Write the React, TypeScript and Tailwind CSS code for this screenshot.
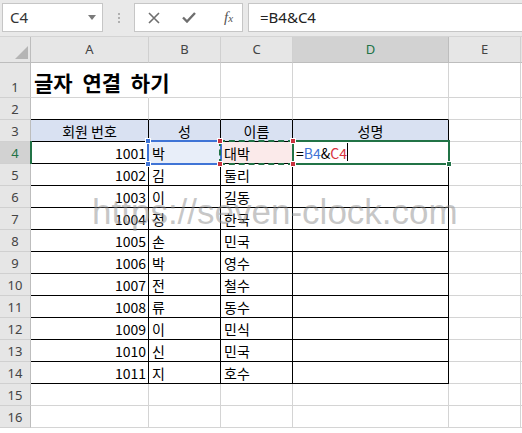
import React from 'react'

const COLS = ['A', 'B', 'C', 'D', 'E']

const DATA: Record<number, [string, string, string]> = {
  4: ['1001', '박', '대박'],
  5: ['1002', '김', '둘리'],
  6: ['1003', '이', '길동'],
  7: ['1004', '정', '한국'],
  8: ['1005', '손', '민국'],
  9: ['1006', '박', '영수'],
  10: ['1007', '전', '철수'],
  11: ['1008', '류', '동수'],
  12: ['1009', '이', '민식'],
  13: ['1010', '신', '민국'],
  14: ['1011', '지', '호수'],
}

const cellFont = { fontFamily: '"Noto Sans CJK KR", "Noto Sans", sans-serif' }

// table A3:D14 has black borders, everything else gets plain gridlines
function borderClass(r: number, c: number) {
  const inTableCol = c <= 3
  const right =
    r === 1 && c === 0
      ? 'border-r-white'
      : inTableCol && r >= 3 && r <= 14
        ? 'border-r-black'
        : 'border-r-[#d4d4d4]'
  const bottom = inTableCol && r >= 2 && r <= 14 ? 'border-b-black' : 'border-b-[#d4d4d4]'
  return `${right} ${bottom}`
}

function Corner({ className }: { className: string }) {
  return <span className={`absolute w-[6px] h-[6px] border border-white ${className}`} />
}

function CellContent({ r, c }: { r: number; c: number }) {
  if (r === 1 && c === 0) {
    return (
      <span className="text-[21px] font-bold leading-[28px] whitespace-nowrap pl-[3px] [word-spacing:5px]">
        글자 연결 하기
      </span>
    )
  }
  if (r === 3 && c <= 3) {
    const label = ['회원 번호', '성', '이름', '성명'][c]
    return <span className="w-full text-center">{label}</span>
  }
  if (r === 4 && c === 3) {
    return (
      <span className="pl-[3px] flex items-end">
        <span>=</span>
        <span className="text-[#3f74d6]">B4</span>
        <span>&amp;</span>
        <span className="text-[#d8343f]">C4</span>
        <span className="inline-block w-px h-[18px] bg-black mb-[1px]" />
      </span>
    )
  }
  const row = DATA[r]
  if (row && c <= 2) {
    if (c === 0) return <span className="w-full text-right pr-[2px]">{row[0]}</span>
    return <span className="pl-[3px]">{row[c]}</span>
  }
  return null
}

function Cell({ r, c }: { r: number; c: number }) {
  let bg = ''
  if (r === 3 && c <= 3) bg = 'bg-[#d9e1f2]'
  if (r === 4 && c === 1) bg = 'bg-[#e8eef9]'
  if (r === 4 && c === 2) bg = 'bg-[#fbeaea]'
  return (
    <div
      className={`relative flex items-end border-r border-b pb-[1px] text-[14px] leading-[18px] text-black ${bg} ${borderClass(r, c)}`}
      style={cellFont}
    >
      <CellContent r={r} c={c} />
      {r === 4 && c === 0 && (
        <span className="absolute left-[-1px] top-[-1px] bottom-[-1px] w-[2px] bg-[#217346]" />
      )}
      {r === 4 && c === 1 && (
        <span className="absolute -left-[2px] -top-[2px] -right-[2px] -bottom-[2px] border-2 border-[#3f74d6] z-10">
          <Corner className="-left-[4px] -top-[4px] bg-[#3f74d6]" />
          <Corner className="-left-[4px] -bottom-[4px] bg-[#3f74d6]" />
        </span>
      )}
      {r === 4 && c === 2 && (
        <span className="absolute -left-[2px] -top-[2px] -right-[2px] -bottom-[2px] border-2 border-dashed border-[#217346] z-20">
          <Corner className="-left-[4px] -top-[4px] bg-[#c8333f]" />
          <Corner className="-right-[4px] -top-[4px] bg-[#c8333f]" />
          <Corner className="-left-[4px] -bottom-[4px] bg-[#c8333f]" />
          <Corner className="-right-[4px] -bottom-[4px] bg-[#c8333f]" />
        </span>
      )}
      {r === 4 && c === 3 && (
        <span className="absolute -left-[1px] -top-[2px] -right-[2px] -bottom-[2px] border-2 border-[#217346] z-10">
          <Corner className="-right-[4px] -bottom-[4px] bg-[#217346]" />
        </span>
      )}
    </div>
  )
}

function FormulaBar() {
  return (
    <div className="flex items-start h-[37px] bg-[#e9e9e9] border-b border-[#d4d4d4] pt-[3px]" style={{ fontFamily: '"Noto Sans", sans-serif' }}>
      <div className="ml-[2px] w-[101px] h-[29px] bg-white border border-[#c6c6c6] flex items-center justify-between pl-[7px] pr-[6px]">
        <span className="text-[15px] text-[#333]">C4</span>
        <svg width="8" height="5" viewBox="0 0 8 5">
          <path d="M0 0 L8 0 L4 5 Z" fill="#7a7a7a" />
        </svg>
      </div>
      <div className="w-[31px] h-[29px] flex flex-col items-center justify-center gap-[2px]">
        <span className="w-[2px] h-[2px] bg-[#b0b0b0]" />
        <span className="w-[2px] h-[2px] bg-[#b0b0b0]" />
        <span className="w-[2px] h-[2px] bg-[#b0b0b0]" />
      </div>
      <div className="w-[109px] h-[29px] bg-white border border-[#c6c6c6] flex items-center pl-[13px] gap-[22px]">
        <svg width="12" height="12" viewBox="0 0 12 12">
          <path d="M1 1 L11 11 M11 1 L1 11" stroke="#6e6e6e" strokeWidth="1.6" />
        </svg>
        <svg width="14" height="11" viewBox="0 0 14 11">
          <path d="M1 5.5 L5 9.5 L13 1" stroke="#6e6e6e" strokeWidth="2.4" fill="none" />
        </svg>
        <span className="text-[15px] italic text-[#555] ml-[6px]" style={{ fontFamily: '"Liberation Serif", serif' }}>
          f<span className="text-[11px]">x</span>
        </span>
      </div>
      <div className="flex-1 ml-[5px] h-[29px] bg-white border-y border-l border-[#c6c6c6] flex items-center pl-[11px]">
        <span className="text-[15px] text-[#222]">=B4&amp;C4</span>
      </div>
    </div>
  )
}

export default function App() {
  const rows = Array.from({ length: 16 }, (_, i) => i + 1)
  return (
    <div className="w-[522px] h-[433px] overflow-hidden bg-white">
      <FormulaBar />
      <div className="relative grid grid-cols-[31px_118px_72px_72px_156px_72px_1fr] grid-rows-[26px_35px_repeat(16,22px)]">
        {/* column headers */}
        <div className="relative bg-[#e6e6e6] border-r border-b border-[#bdbdbd]">
          <svg className="absolute right-[2px] bottom-[3px]" width="13" height="13" viewBox="0 0 13 13">
            <path d="M13 0 L13 13 L0 13 Z" fill="#b5b5b5" />
          </svg>
        </div>
        {COLS.map(col => (
          <div
            key={col}
            className={`flex items-center justify-center border-r border-b text-[13px] ${
              col === 'D'
                ? 'bg-[#d2d2d2] text-[#217346] border-r-[#bdbdbd] border-b-[#bdbdbd]'
                : 'bg-[#e6e6e6] text-[#444] border-r-[#d0d0d0] border-b-[#bdbdbd]'
            }`}
            style={{ fontFamily: '"Noto Sans", sans-serif' }}
          >
            {col}
          </div>
        ))}
        <div className="bg-[#e6e6e6] border-b border-[#bdbdbd]" />

        {rows.map(r => (
          <React.Fragment key={r}>
            <div
              className={`flex items-end justify-center pb-[2px] border-r border-b border-r-[#bdbdbd] border-b-[#d0d0d0] text-[13px] leading-[16px] ${
                r === 4 ? 'bg-[#d2d2d2] text-[#217346]' : 'bg-[#e6e6e6] text-[#444]'
              }`}
              style={{ fontFamily: '"Noto Sans", sans-serif' }}
            >
              {r}
            </div>
            {COLS.map((_, c) => (
              <Cell key={c} r={r} c={c} />
            ))}
            <div className="border-b border-[#d4d4d4]" />
          </React.Fragment>
        ))}

        {/* site watermark over the sheet */}
        <div
          className="absolute left-[92px] top-[157px] text-[35px] leading-none text-[#909090]/50 whitespace-nowrap pointer-events-none z-30"
          style={{ fontFamily: '"Liberation Sans", Arial, sans-serif' }}
        >
          https://seven-clock.com
        </div>
      </div>
    </div>
  )
}
